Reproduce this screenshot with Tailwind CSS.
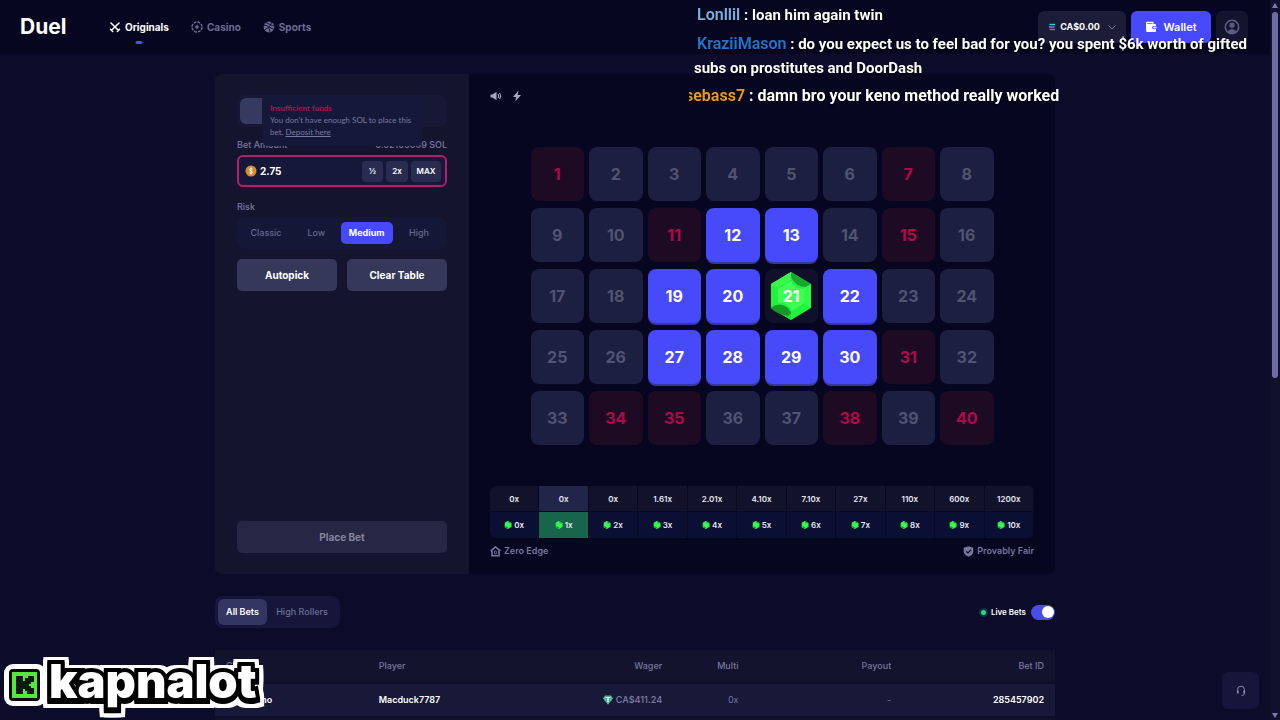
<!DOCTYPE html>
<html lang="en">
<head>
    <meta charset="UTF-8">
    <meta name="viewport" content="width=device-width, initial-scale=1.0">
    <title>Duel - Keno</title>
    <script src="https://cdn.jsdelivr.net/npm/@tailwindcss/browser@4"></script>
</head>
<body class="h-screen overflow-hidden flex bg-[#0c0b29] font-['Inter',sans-serif] text-white">
    <svg class="hidden">
        <symbol id="gem" viewBox="0 0 42 48">
            <path d="M21 0 41 12V36L21 48 1 36V12Z" fill="#22f23d"/>
            <path d="M21 0 41 12 36 15C30 15 24 12 21 5Z" fill="#19a52f"/>
            <path d="M1 12 21 0V8L8 16Z" fill="#35f84c"/>
            <path d="M41 12V36L34 32V16Z" fill="#2dfb46"/>
            <path d="M1 36 8 32 21 40V48Z" fill="#1be035"/>
            <path d="M1 36C6 31 17 31 21 41L18 44Q6 42 1 36Z" fill="#149a2b"/>
            <path d="M21 9C24 15 28 17 34 17V31L22 39C19 32 14 30 8 31V17Z" fill="#3dff56"/>
        </symbol>
    </svg>

    <div class="flex-1 min-w-0 flex flex-col">
        <header class="h-[54px] shrink-0 bg-[#060620] pl-5 pr-[22px] flex items-center">
            <a href="#" class="text-[21px] font-bold w-[89px]">Duel</a>
            <nav class="flex items-center gap-[22px] text-[10px] font-bold text-[#6c6b92]">
                <a href="#" class="relative flex items-center gap-1 text-white">
                    <svg class="size-3" viewBox="0 0 12 12" fill="none" stroke="currentColor" stroke-width="1.6" stroke-linecap="round"><path d="M2 2 9.3 9.2M10 2 2.5 9.3M1.500 8.300l2.200 2.200M10.500 8.300 8.300 10.500"/></svg>
                    Originals
                    <span class="absolute left-1/2 -translate-x-1/2 top-[21px] w-[7px] h-[3px] rounded-full bg-[#4a4dfa]"></span>
                </a>
                <a href="#" class="flex items-center gap-1">
                    <svg class="size-3" viewBox="0 0 12 12" fill="none" stroke="currentColor"><circle cx="6" cy="6" r="5" stroke-width="1.4" stroke-dasharray="2.9 1"/><path d="M6 3.3 6.9 5.1 8.7 6 6.9 6.9 6 8.700 5.1 6.9 3.3 6 5.1 5.1Z" fill="currentColor" stroke="none"/></svg>
                    Casino
                </a>
                <a href="#" class="flex items-center gap-1">
                    <svg class="size-3" viewBox="0 0 12 12"><circle cx="6" cy="6" r="5.4" fill="currentColor"/><path d="M.8 4.4C4 4 6 5 7 11.2M3 1.5C6 3 8.500 4.500 11.300 5M8.500 1.200C8 4 6 6.500 1.500 9M6 6 11 8.500" fill="none" stroke="#060620" stroke-width=".9"/></svg>
                    Sports
                </a>
            </nav>
            <div class="ml-auto flex gap-[5px]">
                <button class="h-8 w-[88px] rounded-md bg-[#1a1c38] flex items-center justify-center gap-1 text-[9px] font-bold">
                    <svg class="size-2" viewBox="0 0 8 8" stroke-width="1.4"><path d="M1.500 1.500H7" stroke="#35d6b5"/><path d="M1 4H6.500" stroke="#6d8ee6"/><path d="M1.500 6.500H7" stroke="#a64fe8"/></svg>
                    CA$0.00
                    <svg class="size-2 ml-1" viewBox="0 0 8 8" fill="none" stroke="#77779d"><path d="M.5 2.500 4 6 7.500 2.500"/></svg>
                </button>
                <button class="h-8 w-20 rounded-md bg-[#474afb] flex items-center justify-center gap-1.5 text-[11px] font-semibold">
                    <svg class="size-3" viewBox="0 0 12 12" fill="currentColor"><path d="M1 1.500C1 1 1.500.7 2 .7H8.500V3H10Q11 3 11 4V5H8.500Q7 5.200 7 6.500T8.500 8H11V10Q11 11 10 11H2.500Q1 11 1 9.500ZM2.300 2.200V3H7.500V2.200Z"/><path d="M8.500 5.800H11.500V7.300H8.500Q7.800 6.500 8.500 5.800"/></svg>
                    Wallet
                </button>
                <button aria-label="Account" class="size-8 rounded-md bg-[#131430] flex items-center justify-center">
                    <svg class="size-4" viewBox="0 0 16 16" fill="none" stroke="#5b5c7f"><circle cx="8" cy="8" r="6.700" stroke-width="1.600"/><circle cx="8" cy="6.200" r="2.600" fill="#5b5c7f" stroke="none"/><path d="M3.300 12.500Q8 7.500 12.700 12.500L10.500 14.300H5.500Z" fill="#5b5c7f" stroke="none"/></svg>
                </button>
            </div>
        </header>

        <main class="w-full max-w-[840px] mx-auto pt-5">
            <section class="flex h-[500px] rounded-md overflow-hidden">
                <form class="w-[254px] shrink-0 bg-[#15142e] px-[22px] py-[21px] flex flex-col">
                    <div class="relative h-8 rounded-lg bg-[#161835] p-[3px]">
                        <button type="button" aria-label="Manual" class="block w-24 h-[26px] rounded-md bg-[#363a60]"></button>
                        <div role="alert" class="absolute left-[25px] top-0 w-[160px] h-[51px] bg-[#16183a] rounded-md pl-2 pt-[7px] font-['Lato',sans-serif] text-[8px] leading-3 text-[#77789f] z-10">
                            <p class="text-[#b80849] font-bold">Insufficient funds</p>
                            <p>You don't have enough SOL to place this bet. <a href="#" class="underline">Deposit here</a></p>
                        </div>
                    </div>
                    <div class="mt-3 flex justify-between text-[9px] leading-3 font-medium text-[#77789f]">
                        <label for="bet_amount">Bet Amount</label>
                        <span>0.02109889 SOL</span>
                    </div>
                    <div class="mt-1 h-8 rounded-md border-2 border-[#b3206a] bg-[#16183a] pl-1.5 pr-1 flex items-center gap-[3px]">
                        <svg class="size-3" viewBox="0 0 12 12"><circle cx="6" cy="6" r="5.500" fill="#d98d33"/><path d="M7.600 4.200Q6 3 4.800 4T6 6T7 8T4.300 7.800M6 2.500V9.500" fill="none" stroke="#fff" stroke-width=".9"/></svg>
                        <input type="text" id="bet_amount" name="bet_amount" value="2.75" class="flex-1 min-w-0 bg-transparent text-[10px] font-bold focus:outline-none">
                        <button type="button" class="h-[21px] w-[21px] rounded bg-[#292c50] text-[8px] font-semibold">½</button>
                        <button type="button" class="h-[21px] w-[22px] rounded bg-[#292c50] text-[8px] font-semibold">2x</button>
                        <button type="button" class="h-[21px] w-[30px] rounded bg-[#292c50] text-[8px] font-semibold">MAX</button>
                    </div>
                    <p class="mt-[14px] text-[9px] leading-3 font-medium text-[#77789f]">Risk</p>
                    <div class="mt-1 h-8 rounded-lg bg-[#141736] flex items-center justify-between px-[3px] text-[9px] font-medium text-[#66678f]">
                        <button type="button" class="h-[22px] w-[52px]">Classic</button>
                        <button type="button" class="h-[22px] w-[46px]">Low</button>
                        <button type="button" class="h-[22px] w-[52px] rounded-[5px] bg-[#474afb] text-white font-bold">Medium</button>
                        <button type="button" class="h-[22px] w-[50px]">High</button>
                    </div>
                    <div class="mt-[10px] flex gap-[10px] text-[10px] font-bold">
                        <button type="button" class="flex-1 h-8 rounded-[5px] bg-[#353859]">Autopick</button>
                        <button type="button" class="flex-1 h-8 rounded-[5px] bg-[#353859]">Clear Table</button>
                    </div>
                    <button type="submit" class="mt-auto h-8 rounded-[5px] bg-[#252745] text-[10px] font-bold text-[#85859c]">Place Bet</button>
                </form>

                <div class="flex-1 min-w-0 bg-[#060621] px-[21px] pt-4 flex flex-col text-[#aaa9c9]">
                    <div class="flex gap-[9px]">
                        <button aria-label="Sound"><svg class="size-3" viewBox="0 0 12 12" fill="currentColor"><path d="M.5 4.500H2.500L6.500 1.800V10.200L2.500 7.500H.5Z"/><path d="M8 4Q9.200 6 8 8M9.500 3Q11.500 6 9.500 9" fill="none" stroke="currentColor" stroke-width="1.100"/></svg></button>
                        <button aria-label="Turbo"><svg class="size-3" viewBox="0 0 12 12" fill="currentColor"><path d="M7.500.5 2 7H5.200L4.300 11.500 10 5H6.500Z"/></svg></button>
                    </div>
                    <div id="board" class="mt-[45px] w-full max-w-[463px] mx-auto grid grid-cols-8 gap-x-[5px] gap-y-[7px] text-base font-bold"></div>
                    <table class="mt-[41px] w-full table-fixed border-separate border-spacing-0 text-[8px] font-semibold text-[#e6e6f2] text-center rounded-md overflow-hidden">
                        <tbody>
                            <tr id="payouts"></tr>
                            <tr id="hits"></tr>
                        </tbody>
                    </table>
                    <div class="mt-[7px] flex justify-between text-[9px] leading-3 font-semibold text-[#77769d]">
                        <a href="#" class="flex items-center gap-[3px]">
                            <svg class="size-[11px]" viewBox="0 0 11 11" fill="none" stroke="currentColor" stroke-width="1.600"><path d="M.7 4.800 5.500.9 10.300 4.800M2 4.500V9.800H9V4.500"/><ellipse cx="5.500" cy="6.500" rx="1.200" ry="1.500" stroke-width="1"/></svg>
                            Zero Edge
                        </a>
                        <a href="#" class="flex items-center gap-[3px]">
                            <svg class="size-[11px]" viewBox="0 0 11 11"><path d="M5.500.3 10.300 1.800V5.500Q10 9 5.500 10.800Q1 9 .7 5.500V1.800Z" fill="currentColor"/><path d="M3.200 5.400 4.900 7 7.900 3.800" fill="none" stroke="#060621" stroke-width="1.200"/></svg>
                            Provably Fair
                        </a>
                    </div>
                </div>
            </section>

            <div class="mt-[22px] flex items-center justify-between">
                <div class="h-8 rounded-lg bg-[#15163a] p-[3px] flex text-[9px] font-medium text-[#6c6d94]">
                    <button class="w-[49px] rounded-md bg-[#333660] text-white font-semibold">All Bets</button>
                    <button class="w-[70px]">High Rollers</button>
                </div>
                <label class="flex items-center gap-[5px] text-[8px] font-semibold">
                    <span class="size-[5px] rounded-full bg-[#25d68d] ring-2 ring-[#25d68d]/20"></span>
                    Live Bets
                    <input type="checkbox" checked class="appearance-none w-6 h-[15px] rounded-full bg-[#4a4dea] before:block before:size-3 before:rounded-full before:bg-white before:mt-[1px] before:ml-[11px]">
                </label>
            </div>

            <table class="mt-[22px] w-full table-fixed border-collapse text-[9px]">
                <colgroup>
                    <col class="w-2/11"><col class="w-2/11"><col class="w-2/11"><col class="w-1/11"><col class="w-2/11"><col class="w-2/11">
                </colgroup>
                <thead>
                    <tr class="h-[33px] bg-[#14132e] text-[#75769c]">
                        <th class="px-[11px] text-left font-medium">Game</th>
                        <th class="px-[11px] text-left font-medium">Player</th>
                        <th class="px-[11px] text-right font-medium">Wager</th>
                        <th class="px-[11px] text-right font-medium">Multi</th>
                        <th class="px-[11px] text-right font-medium">Payout</th>
                        <th class="px-[11px] text-right font-medium">Bet ID</th>
                    </tr>
                </thead>
                <tbody>
                    <tr class="h-[34px] bg-[#181938] border-y-2 border-[#0e0e2b] text-[#75769c]">
                        <td class="px-2 font-semibold text-white">Ziggy Keno</td>
                        <td class="px-[11px] font-semibold text-white">Macduck7787</td>
                        <td class="px-[11px] font-semibold">
                            <div class="flex items-center justify-end gap-[3px]">
                                <svg class="size-[10px]" viewBox="0 0 10 10"><path d="M2 .5H8L10 3.500 5 9.700 0 3.500Z" fill="#4fb59b"/><path d="M2.500 2.500H7.500M5 2.500V7" stroke="#fff" stroke-width="1.200"/></svg>
                                CA$411.24
                            </div>
                        </td>
                        <td class="px-[11px] text-right">0x</td>
                        <td class="px-[11px] text-right">-</td>
                        <td class="px-[11px] text-right font-semibold text-white">285457902</td>
                    </tr>
                    <tr class="h-[34px] bg-[#14132e]"><td colspan="6"></td></tr>
                </tbody>
            </table>
        </main>
    </div>

    <!-- page scrollbar -->
    <div class="w-[10px] shrink-0 bg-[#11112d] flex flex-col items-center pt-[3px] pb-[2px]">
        <svg class="w-1.5 h-[5px]" viewBox="0 0 6 5" fill="#7a7ab0"><path d="M3 0 6 5H0Z"/></svg>
        <div class="mt-1 w-1.5 h-[366px] rounded-full bg-[#6c6da2]"></div>
        <svg class="w-1.5 h-[5px] mt-auto" viewBox="0 0 6 5" fill="#7a7ab0"><path d="M0 0H6L3 5Z"/></svg>
    </div>

    <button aria-label="Support" class="fixed right-[21px] bottom-[11px] size-[37px] rounded-md bg-[#15163a] flex items-center justify-center">
        <svg class="size-3" viewBox="0 0 12 12" fill="none" stroke="#8586a8"><path d="M2.500 7V4.800Q2.700 1.200 6 1.200T9.500 4.800V8.500Q9.200 10.500 6.500 10.700"/><path d="M2.800 5.500V8.500M9.200 5.500V8.500" stroke-width="1.800"/></svg>
    </button>

    <!-- stream chat overlay -->
    <div class="fixed left-[689px] top-[3px] w-[580px] overflow-hidden font-['Roboto',sans-serif] text-[15px] leading-6 font-bold [text-shadow:0_1px_2px_#000]">
        <p class="pl-2"><span class="text-[#78afe4] text-base leading-6 font-semibold">Lonllil</span> : loan him again twin</p>
        <p class="mt-[5px] pl-[5px]"><span class="text-[#2176cf] text-base leading-6 font-semibold pl-[3px]">KraziiMason</span> : do you expect us to feel bad for you? you spent $6k worth of gifted subs on prostitutes and DoorDash</p>
        <p class="mt-1 -ml-1 text-base leading-6"><span class="text-[#f29c12] font-semibold">sebass7</span> : damn bro your keno method really worked</p>
    </div>

    <!-- streamer badge -->
    <div class="fixed left-1 bottom-1 flex items-center gap-[3px]">
        <svg class="size-[42px]" viewBox="0 0 42 42"><rect width="42" height="42" rx="9" fill="#fff"/><rect x="5" y="5" width="31" height="32" rx="4" fill="#0a0a0a"/><rect x="8" y="8" width="25" height="26" fill="#55e83c"/><path d="M12 12H19V17H21V14H24V12H30V18H27V20H25V22H27V24H30V30H23V27H21V25H19V30H12Z" fill="#0c1a0c"/></svg>
        <span class="pb-2 text-[47px] leading-[54px] font-black text-white [-webkit-text-stroke:8px_#000] [paint-order:stroke_fill] [filter:drop-shadow(0_2px_0_#000)_drop-shadow(4px_0_0_#fff)_drop-shadow(-4px_0_0_#fff)_drop-shadow(0_4px_0_#fff)_drop-shadow(0_-3px_0_#fff)]">kapnalot</span>
    </div>

    <script>
        const picked = [12, 13, 19, 20, 22, 27, 28, 29, 30];
        const missed = [1, 7, 11, 15, 31, 34, 35, 38, 40];
        const hit = 21;
        const board = document.getElementById('board');

        for (let i = 1; i <= 40; i++) {
            const tile = document.createElement('button');
            tile.className = 'h-[54px] rounded-lg ';
            tile.textContent = i;
            if (picked.includes(i)) {
                tile.className += 'bg-[#474afb] text-white shadow-[0_2px_0_#35379f]';
            } else if (missed.includes(i)) {
                tile.className += 'bg-[#1d0b24] text-[#b3074c]';
            } else if (i === hit) {
                tile.className += 'bg-[#10102a] text-white grid place-items-center';
                tile.innerHTML = '<svg class="col-start-1 row-start-1 w-[42px] h-12"><use href="#gem"/></svg><span class="col-start-1 row-start-1 z-10">21</span>';
            } else {
                tile.className += 'bg-[#1c1f40] text-[#515373]';
            }
            board.appendChild(tile);
        }

        const payouts = ['0x', '0x', '0x', '1.61x', '2.01x', '4.10x', '7.10x', '27x', '110x', '600x', '1200x'];
        payouts.forEach(function(value, i) {
            const top = i === 1 ? 'bg-[#21254a]' : 'bg-[#12122b]';
            const bottom = i === 1 ? 'bg-[#17664b]' : 'bg-[#0b0f34]';
            document.getElementById('payouts').innerHTML += '<td class="h-[26px] border-r border-b border-[#080822] ' + top + '">' + value + '</td>';
            document.getElementById('hits').innerHTML += '<td class="h-[26px] border-r border-[#080822] ' + bottom + '"><span class="flex items-center justify-center gap-0.5"><svg class="size-2"><use href="#gem"/></svg>' + i + 'x</span></td>';
        });
    </script>
</body>
</html>
